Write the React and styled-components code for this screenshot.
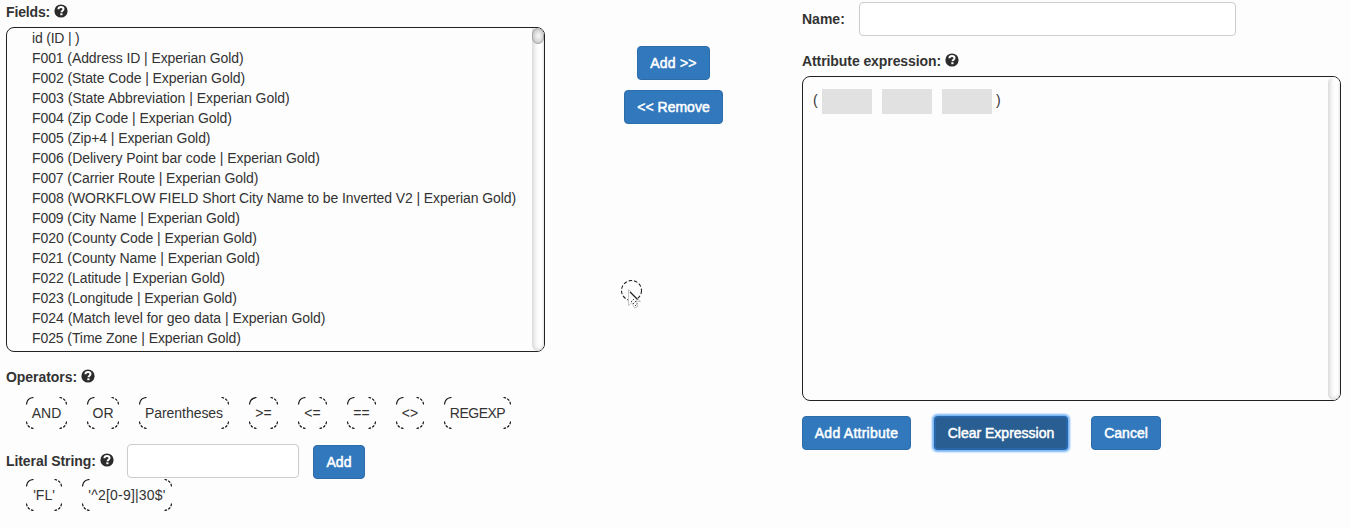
import React from "react";
import styled, { createGlobalStyle, css } from "styled-components";

const GlobalStyle = createGlobalStyle`
  * { box-sizing: border-box; }
  body {
    margin: 0;
    background: #fdfdfd;
    color: #333;
    font: 14px/20px "Liberation Sans", Arial, sans-serif;
  }
`;

const Page = styled.main`
  position: relative;
  display: grid;
  grid-template-columns: 539px 257px 539px;
  width: 1351px;
  height: 528px;
  padding-left: 6px;
  overflow: hidden;
`;

const Column = styled.section`
  display: flex;
  flex-direction: column;
  padding-top: ${(p) => p.$top}px;
`;

const Transfer = styled(Column)`
  align-items: center;
  gap: 10px;
`;

const Label = styled.div`
  display: flex;
  align-items: center;
  height: 20px;
  gap: 4px;
  font-weight: 700;
  white-space: nowrap;
  letter-spacing: ${(p) => p.$spacing || 0}px;
`;

const OperatorsLabel = styled(Label)`
  margin-top: 15px;
`;

const HelpSvg = styled.svg`
  flex: none;
  width: 14px;
  height: 14px;
  margin-top: -2px;
`;

const Panel = styled.div`
  display: flex;
  height: 325px;
  margin-top: 5px;
  border: 1px solid #222;
  border-radius: 8px;
  overflow: hidden;
`;

const FieldList = styled.ul`
  flex: 1;
  margin: 0;
  padding: 0 0 0 25px;
  list-style: none;
`;

const Field = styled.li`
  height: 20px;
  white-space: nowrap;
  letter-spacing: ${(p) => p.$spacing}px;
`;

const Scrollbar = styled.div`
  flex: none;
  width: 12px;
  border-radius: ${(p) => (p.$rounded ? "6px" : "0 0 6px 6px")};
  background: linear-gradient(90deg, #dcdcdc, #f0f0f0 25%, #fdfdfd 50%, #fff 80%, #f0f0f0);
  box-shadow: inset 0 -2px 3px #ddd;
`;

const Thumb = styled.div`
  width: 12px;
  height: 16px;
  border-radius: 6px;
  border: 1px solid #a6a6a6;
  background: radial-gradient(ellipse at 55% 50%, #f4f4f4 10%, #d0d0d0 65%, #b0b0b0);
`;

const Button = styled.button`
  width: ${(p) => p.$width}px;
  height: 34px;
  padding: 0;
  border: 1px solid #2c6ca8;
  border-radius: 4px;
  background: #3178bd;
  color: #fff;
  font: 14px/20px "Liberation Sans", Arial, sans-serif;
  -webkit-text-stroke: 0.5px #fff;
  letter-spacing: ${(p) => p.$spacing || 0}px;
  white-space: nowrap;
  ${(p) =>
    p.$active &&
    css`
      border: 2px solid #2967ab;
      background: #285e91;
      box-shadow: 0 0 2px 1.5px #79b5f5;
    `}
`;

const TextInput = styled.input`
  width: ${(p) => p.$width}px;
  height: 34px;
  border: 1px solid #ccc;
  border-radius: 4px;
  background: #fff;
`;

const ChipRow = styled.div`
  display: flex;
  gap: 20px;
  height: 32px;
  margin-top: ${(p) => p.$top}px;
  padding-left: 20px;
`;

const ChipBox = styled.div`
  position: relative;
  display: flex;
  align-items: center;
  justify-content: center;
  width: ${(p) => p.$width}px;
  height: 32px;
  white-space: nowrap;
  letter-spacing: ${(p) => p.$spacing || 0}px;
`;

const CornerSvg = styled.svg`
  position: absolute;
  width: 8px;
  height: 8px;
  ${(p) => (p.$side.includes("b") ? "bottom: 0;" : "top: 0;")}
  ${(p) => (p.$side.includes("r") ? "right: 0;" : "left: 0;")}
  transform: scale(${(p) => (p.$side.includes("r") ? -1 : 1)}, ${(p) => (p.$side.includes("b") ? -1 : 1)});
`;

const LiteralRow = styled.div`
  display: flex;
  align-items: center;
  height: 34px;
  margin-top: 15px;
`;

const LiteralLabel = styled(Label)`
  width: 121px;
`;

const AddButton = styled(Button)`
  margin: 2px 0 0 14px;
`;

const NameRow = styled.div`
  display: flex;
  align-items: center;
  height: 34px;
  margin-bottom: 15px;
`;

const NameLabel = styled(Label)`
  width: 57px;
`;

const Expression = styled.div`
  flex: 1;
  display: flex;
  height: 25px;
  margin-top: 12px;
  padding-left: 10px;
`;

const Paren = styled.span`
  width: 9px;
  padding-top: 1px;
  &:last-child { margin-left: -6px; }
`;

const Slot = styled.span`
  width: 50px;
  height: 25px;
  margin-right: 10px;
  background: #e1e1e1;
`;

const Actions = styled.div`
  display: flex;
  gap: 23px;
  margin-top: 15px;
`;

const CursorSvg = styled.svg`
  position: absolute;
  left: 619px;
  top: 278px;
  width: 26px;
  height: 34px;
`;

const Help = () => (
  <HelpSvg viewBox="0 0 14 14">
    <circle cx="7" cy="7" r="6.6" fill="#2b2b2b" />
    <path d="M4.4 5.3C4.5 3.7 5.5 3 7 3c1.5 0 2.5.8 2.5 2.1 0 1.6-2 1.7-2 3.2" fill="none" stroke="#fff" strokeWidth="2" />
    <path d="M6.3 9.3h2.2v1.9H6.3z" fill="#fff" />
  </HelpSvg>
);

const Chip = ({ text, width, spacing }) => (
  <ChipBox $width={width} $spacing={spacing}>
    {["tl", "tr", "bl", "br"].map((side) => (
      <CornerSvg key={side} $side={side} viewBox="0 0 8 8">
        <path
          d="M.5 7.5C.8 3.6 3.6.8 7.5.5"
          fill="none"
          stroke="#111"
          strokeWidth="1.15"
          strokeDasharray={side === "tl" ? "none" : "2.8 1.3"}
        />
      </CornerSvg>
    ))}
    {text}
  </ChipBox>
);

const fields = [
  ["id (ID | )", -0.2],
  ["F001 (Address ID | Experian Gold)", -0.09],
  ["F002 (State Code | Experian Gold)", -0.07],
  ["F003 (State Abbreviation | Experian Gold)", -0.03],
  ["F004 (Zip Code | Experian Gold)", -0.07],
  ["F005 (Zip+4 | Experian Gold)", -0.08],
  ["F006 (Delivery Point bar code | Experian Gold)", -0.045],
  ["F007 (Carrier Route | Experian Gold)", -0.085],
  ["F008 (WORKFLOW FIELD Short City Name to be Inverted V2 | Experian Gold)", -0.082],
  ["F009 (City Name | Experian Gold)", -0.09],
  ["F020 (County Code | Experian Gold)", -0.06],
  ["F021 (County Name | Experian Gold)", -0.09],
  ["F022 (Latitude | Experian Gold)", -0.07],
  ["F023 (Longitude | Experian Gold)", -0.06],
  ["F024 (Match level for geo data | Experian Gold)", -0.025],
  ["F025 (Time Zone | Experian Gold)", -0.09],
];

const operators = [
  ["AND", 41],
  ["OR", 32],
  ["Parentheses", 90, -0.05],
  [">=", 29],
  ["<=", 29],
  ["==", 29],
  ["<>", 28],
  ["REGEXP", 67, -0.5],
];

const literals = [
  ["'FL'", 36],
  ["'^2[0-9]|30$'", 90, 0.2],
];

export default function App() {
  return (
    <>
      <GlobalStyle />
      <Page>
        <Column $top={2}>
          <Label $spacing={-0.15}>Fields: <Help /></Label>
          <Panel>
            <FieldList>
              {fields.map(([text, spacing]) => (
                <Field key={text} $spacing={spacing}>{text}</Field>
              ))}
            </FieldList>
            <Scrollbar><Thumb /></Scrollbar>
          </Panel>
          <OperatorsLabel $spacing={-0.05}>Operators: <Help /></OperatorsLabel>
          <ChipRow $top={10}>
            {operators.map(([text, width, spacing]) => (
              <Chip key={text} text={text} width={width} spacing={spacing} />
            ))}
          </ChipRow>
          <LiteralRow>
            <LiteralLabel $spacing={-0.08}>Literal String: <Help /></LiteralLabel>
            <TextInput $width={172} aria-label="Literal string" />
            <AddButton $width={52}>Add</AddButton>
          </LiteralRow>
          <ChipRow $top={1}>
            {literals.map(([text, width, spacing]) => (
              <Chip key={text} text={text} width={width} spacing={spacing} />
            ))}
          </ChipRow>
        </Column>

        <Transfer $top={46}>
          <Button $width={73} $spacing={0.2}>Add &gt;&gt;</Button>
          <Button $width={99}>&lt;&lt; Remove</Button>
        </Transfer>

        <Column $top={2}>
          <NameRow>
            <NameLabel>Name:</NameLabel>
            <TextInput $width={377} aria-label="Name" />
          </NameRow>
          <Label $spacing={-0.08}>Attribute expression: <Help /></Label>
          <Panel>
            <Expression>
              <Paren>(</Paren>
              <Slot /><Slot /><Slot />
              <Paren>)</Paren>
            </Expression>
            <Scrollbar $rounded />
          </Panel>
          <Actions>
            <Button $width={109} $spacing={0.25}>Add Attribute</Button>
            <Button $width={134} $active>Clear Expression</Button>
            <Button $width={70}>Cancel</Button>
          </Actions>
        </Column>

        <CursorSvg viewBox="0 0 26 34">
          <circle cx="12.5" cy="12.5" r="10" fill="none" stroke="#222" strokeWidth="1.1" strokeDasharray="3.5 2" />
          <path d="M9.5 11.5v16l3.5-3 2.5 5.5 3.5-1.5-2.5-5h5z" fill="#fff" stroke="#c4c4c4" strokeWidth="1" />
          <path d="M11 14l7.5 7.5" fill="none" stroke="#222" strokeWidth="1.1" />
          <path d="M12 24l3.5-3.5M14 26l4.5-4.5M16 28l2.5-2.5" fill="none" stroke="#444" strokeDasharray="1.6 1" />
        </CursorSvg>
      </Page>
    </>
  );
}
